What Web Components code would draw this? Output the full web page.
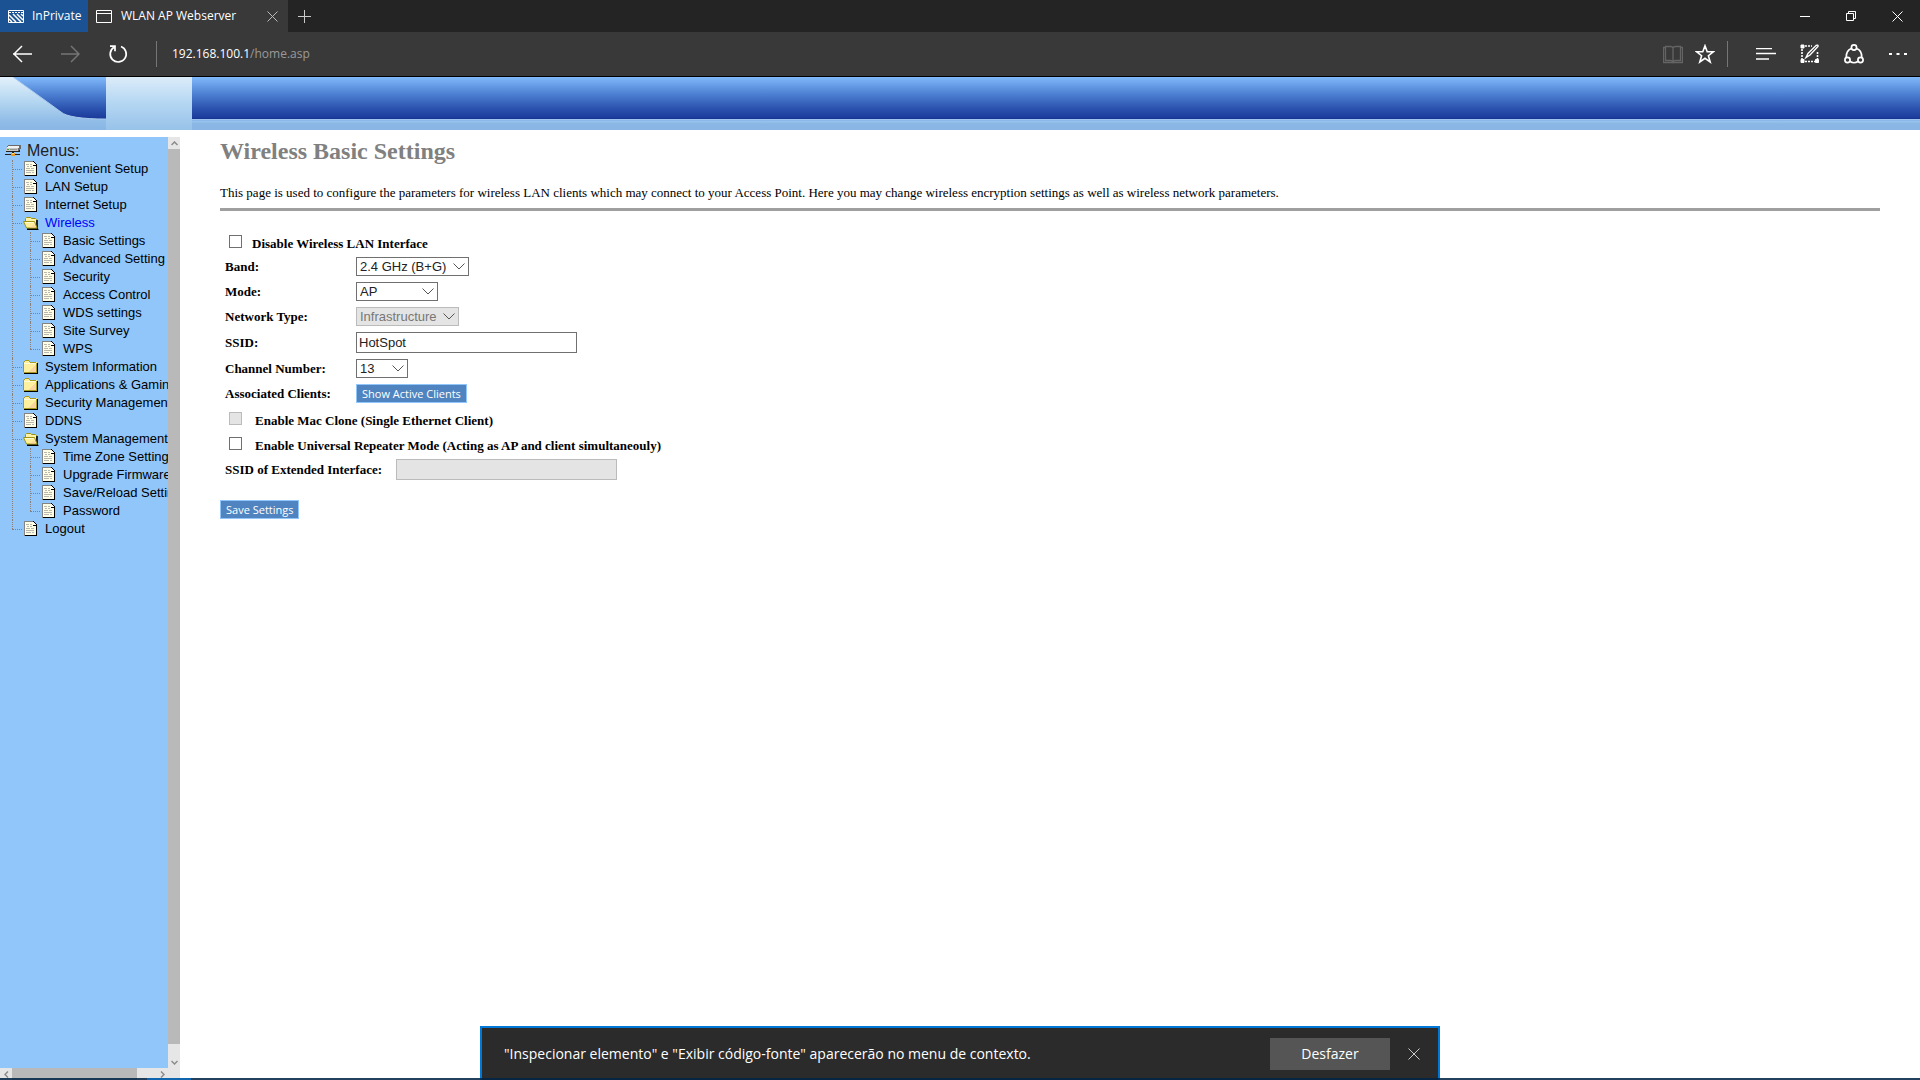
<!DOCTYPE html>
<html lang="en">
<head>
<meta charset="utf-8">
<title>WLAN AP Webserver</title>
<style>
  html, body { height: 100%; margin: 0; }
  body {
    display: flex;
    flex-direction: column;
    overflow: hidden;
    background: #fff;
    --ui-font: "Open Sans", "Noto Sans", sans-serif;
    --tree-font: "Liberation Sans", Arial, sans-serif;
    --page-font: "Liberation Serif", "Times New Roman", serif;
  }
  .frames { flex: 1; display: flex; min-height: 0; padding-top: 7px; }
</style>
</head>
<body>
<browser-tabs></browser-tabs>
<browser-toolbar></browser-toolbar>
<site-banner></site-banner>
<div class="frames">
  <menu-frame>
    <tree-node kind="root" label="Menus:">
      <tree-node label="Convenient Setup"></tree-node>
      <tree-node label="LAN Setup"></tree-node>
      <tree-node label="Internet Setup"></tree-node>
      <tree-node kind="open" label="Wireless" active>
        <tree-node label="Basic Settings"></tree-node>
        <tree-node label="Advanced Setting"></tree-node>
        <tree-node label="Security"></tree-node>
        <tree-node label="Access Control"></tree-node>
        <tree-node label="WDS settings"></tree-node>
        <tree-node label="Site Survey"></tree-node>
        <tree-node label="WPS"></tree-node>
      </tree-node>
      <tree-node kind="folder" label="System Information"></tree-node>
      <tree-node kind="folder" label="Applications &amp; Gaming"></tree-node>
      <tree-node kind="folder" label="Security Management"></tree-node>
      <tree-node label="DDNS"></tree-node>
      <tree-node kind="open" label="System Management">
        <tree-node label="Time Zone Setting"></tree-node>
        <tree-node label="Upgrade Firmware"></tree-node>
        <tree-node label="Save/Reload Settings"></tree-node>
        <tree-node label="Password"></tree-node>
      </tree-node>
      <tree-node label="Logout"></tree-node>
    </tree-node>
  </menu-frame>
  <wireless-settings></wireless-settings>
</div>
<notice-bar>
  "Inspecionar elemento" e "Exibir código-fonte" aparecerão no menu de contexto.
  <span slot="action">Desfazer</span>
</notice-bar>
<taskbar-edge></taskbar-edge>

<script>
class BrowserTabs extends HTMLElement {
  constructor() {
    super();
    this.attachShadow({ mode: "open" });
  }

  connectedCallback() {
    this.shadowRoot.innerHTML = `
      <style>
        :host {
          display: flex;
          flex: none;
          height: 32px;
          background: #242424;
          color: #fff;
          font: 12px/16px var(--ui-font);
        }
        svg { display: block; fill: none; stroke: currentColor; }
        button { margin: 0; padding: 0; border: 0; background: none; color: inherit; display: grid; place-items: center; }
        .private { display: flex; align-items: center; gap: 8px; width: 80px; padding-left: 8px; background: #1a5293; }
        .tab { display: flex; align-items: center; gap: 9px; width: 184px; padding: 0 8px; background: #393939; }
        .tab span { flex: 1; white-space: nowrap; }
        .tab button { width: 16px; height: 16px; color: #bbb; }
        .add { width: 33px; color: #ccc; }
        .window { display: flex; margin-left: auto; }
        .window button { width: 46px; }
      </style>
      <div class="private">
        <svg width="16" height="13">
          <path d="M.5 .5h15v12h-15z"/>
          <path d="M1 2.500h14" stroke-dasharray="2 1"/>
          <path d="M1 5l7 7M1 9l3 3M5 4l8 8M9 4l6 6M13 4l2 2" stroke-width="1.500"/>
        </svg>
        <span>InPrivate</span>
      </div>
      <div class="tab">
        <svg width="16" height="13"><path d="M.5 .5h15v12h-15zM0 3.500h16"/></svg>
        <span>WLAN AP Webserver</span>
        <button aria-label="Close tab"><svg width="11" height="11"><path d="M.5 .5l10 10M10.500 .5l-10 10"/></svg></button>
      </div>
      <button class="add" aria-label="New tab"><svg width="13" height="13"><path d="M6.500 0v13M0 6.500h13"/></svg></button>
      <div class="window">
        <button aria-label="Minimize"><svg width="10" height="10"><path d="M0 5.500h10"/></svg></button>
        <button aria-label="Restore"><svg width="10" height="10"><path d="M.5 2.500h7v7h-7zM2.500 2.500v-2h7v7h-2"/></svg></button>
        <button aria-label="Close"><svg width="11" height="11"><path d="M.5 .5l10 10M10.500 .5l-10 10"/></svg></button>
      </div>
    `;
  }
}

class BrowserToolbar extends HTMLElement {
  constructor() {
    super();
    this.attachShadow({ mode: "open" });
  }

  connectedCallback() {
    this.shadowRoot.innerHTML = `
      <style>
        :host {
          display: flex;
          flex: none;
          align-items: center;
          box-sizing: border-box;
          height: 45px;
          border-bottom: 1px solid #000;
          background: #393939;
          color: #fff;
          font: 12px/16px var(--ui-font);
        }
        svg { display: block; fill: none; stroke: currentColor; }
        button { margin: 0; padding: 0; border: 0; background: none; color: inherit; width: 48px; height: 44px; display: grid; place-items: center; }
        .off { color: #757575; }
        .rule { width: 1px; height: 26px; background: #767676; }
        .nav { display: flex; align-items: center; width: 157px; }
        .nav .rule { margin-left: auto; }
        .address { flex: 1; padding-left: 15px; }
        .address span { color: #999; }
        .tools { display: flex; align-items: center; }
        .tools button { width: 44px; }
        .tools .narrow { width: 32px; }
        .tools .rule { margin: 0 16px 0 6px; }
      </style>
      <div class="nav">
        <button aria-label="Back" style="width: 46px"><svg width="20" height="18" stroke-width="1.500"><path d="M0 9h19M9 1L1 9l8 8"/></svg></button>
        <button aria-label="Forward" class="off"><svg width="20" height="18" stroke-width="1.500"><path d="M1 9h18M11 1l8 8-8 8"/></svg></button>
        <button aria-label="Refresh"><svg width="20" height="20" stroke-width="1.700"><path d="M6 3.200A8 8 0 1 0 13 2.500M2 2.200h5v5"/></svg></button>
        <span class="rule"></span>
      </div>
      <div class="address">192.168.100.1<span>/home.asp</span></div>
      <div class="tools">
        <button class="narrow" aria-label="Reading view" style="color: #646464">
          <svg width="20" height="19" stroke-width="1.300"><path d="M.5 2.500h2v-1h5q2 0 2.500 1.500 .5-1.500 2.500-1.500h5v1h2v15h-19zM2.500 2.500v13h5q2 0 2.500 1.500 .5-1.500 2.500-1.500h5v-13M10 3v14"/></svg>
        </button>
        <button class="narrow" aria-label="Favorites">
          <svg width="20" height="20" stroke-width="1.600"><path d="M10 1.800l2.200 6h6.100l-4.900 3.900 1.800 6.300-5.200-3.700L4.800 18l1.800-6.300-4.900-3.900h6.100z"/></svg>
        </button>
        <span class="rule"></span>
        <button aria-label="Hub"><svg width="20" height="12"><path d="M0 .5h16M0 5.500h20M0 11h13" stroke-width="1.300"/></svg></button>
        <button aria-label="Make a web note">
          <svg width="20" height="20">
            <path d="M5 2h7M2 5v10M17.500 8v7M5 17.500h10" stroke-width="1.600" stroke-dasharray="2 1"/>
            <path d="M1 1h3v3h-3zM1 15.500h3v3h-3zM15.500 15.500h3v3h-3z" fill="#fff"/>
            <path d="M6 13.500l2-4 8-8q2.500-1 2 1l-8 8.500z" stroke-width="1.400"/>
          </svg>
        </button>
        <button aria-label="Share">
          <svg width="20" height="20" stroke-width="1.700">
            <circle cx="10" cy="3.500" r="2.600"/><circle cx="3.500" cy="16" r="2.600"/><circle cx="16.500" cy="16" r="2.600"/>
            <path d="M7.500 4.500Q2 6.500 2.300 13.500M12.500 4.500Q18 6.500 17.700 13.500M6 17.500q4 2.500 8 0"/>
          </svg>
        </button>
        <button aria-label="More"><svg width="18" height="4"><path d="M0 1h3v2h-3zM7.500 1h3v2h-3zM15 1h3v2h-3z" stroke="none" fill="#fff"/></svg></button>
      </div>
    `;
  }
}

class SiteBanner extends HTMLElement {
  constructor() {
    super();
    this.attachShadow({ mode: "open" });
  }

  connectedCallback() {
    this.shadowRoot.innerHTML = `
      <style>
        :host {
          display: flex;
          flex: none;
          height: 53px;
          background: linear-gradient(#80b9fb 0, #4a7dd0 18px, #2a51ad 32px, #1c3b9a 41px, #14308c 42px, #a9cdf0 42px, #7fb0e6 44px, #98c4ec 44px, #8ab6e5 47px, #8ab6e5);
        }
        svg { display: block; }
        .pale { width: 86px; background: linear-gradient(#dcecf9, #b2d5f2 28px, #98c2e9 53px); }
      </style>
      <svg width="106" height="53">
        <defs>
          <linearGradient id="g" x2="0" y2="1">
            <stop stop-color="#e3f1fb"/><stop offset=".5" stop-color="#b0d4f0"/><stop offset=".85" stop-color="#8fbbe7"/><stop offset="1" stop-color="#8ab6e5"/>
          </linearGradient>
        </defs>
        <path d="M0 0h13L61 35q8 7 45 7v11H0z" fill="url(#g)"/>
        <path d="M13 0L61 35q8 7 45 7" fill="none" stroke="#a9c9ee"/>
      </svg>
      <div class="pale"></div>
    `;
  }
}

const ICONS = {
  root: `
    <svg width="16" height="12" shape-rendering="crispEdges">
      <path d="M3 0h13v4h-1v1h-1v1H1V3h1V1h1z" fill="#6a6a6a"/>
      <path d="M3 1h11v1H3zM2 2h12v1H2z" fill="#f2f2f2"/>
      <path d="M1 3h12v3H1z" fill="#c6c6c6"/>
      <path d="M2 4h2v1H2z" fill="#3a3"/>
      <path d="M5 4h7v1H5z" fill="#999"/>
      <path d="M1 6h13V5h1v2H1z" fill="#222"/>
      <path d="M7 7h2v2H7zM0 9h15v1H0z" fill="#222"/>
      <path d="M6 8h4v3H6z" fill="#ee9a20"/>
      <path d="M7 8h2v1H7z" fill="#ffe080"/>
    </svg>`,
  page: `
    <svg width="13" height="16" shape-rendering="crispEdges">
      <path d="M1 1h8l3 3v11H1z" fill="#fffee4"/>
      <path d="M0 0h9v1H1v14H0z" fill="#848484"/>
      <path d="M1 15h12V4h-1v10H1z" fill="#000"/>
      <path d="M9 0h1v1h1v1h1v1h1v2H9z" fill="#000"/>
      <path d="M9 1h1v1h1v1h1v1H9z" fill="#fff"/>
      <path d="M2 3h3v1H2zM6 3h2v1H6zM3 5h2v1H3zM6 5h2v1H6zM2 7h4v1H2zM7 7h3v1H7zM2 9h8v1H2zM2 11h5v1H2zM8 11h2v1H8z" fill="#b8b8b0"/>
    </svg>`,
  folder: `
    <svg width="16" height="14" shape-rendering="crispEdges">
      <path d="M1 12V2h1V1h5v1h7v10z" fill="#fff0a0"/>
      <path d="M5 12l8-7v7z" fill="#fcd4a0"/>
      <path d="M0 2h1v10H0zM1 1h1v1H1zM2 0h4v1H2zM6 1h1v1H6zM7 2h6v1H7zM1 12h13v1H1zM13 3h1v9h-1z" fill="#a59a20"/>
      <path d="M1 3h12v1H1z" fill="#fffbd8"/>
      <path d="M14 3h1v11H1v-1h13z" fill="#000"/>
    </svg>`,
  open: `
    <svg width="16" height="14">
      <path d="M2.500 6V2.500l1-1h4l1 1h4l1 1V11" fill="#fff3a8" stroke="#9c9410"/>
      <path d="M13 4h2v9H4v-1h9z" fill="#222"/>
      <path d="M.5 5.500h11l2.500 6.500H3.500z" fill="#ffee9c" stroke="#9c9410"/>
      <path d="M2 6.500h9" stroke="#fffbd8"/>
      <path d="M7 11.500l4-3 1 3z" fill="#fcd4a0"/>
      <path d="M4 13.500h11.500" stroke="#000"/>
    </svg>`
};

class TreeNode extends HTMLElement {
  constructor() {
    super();
    this.attachShadow({ mode: "open" });
  }

  connectedCallback() {
    const kind = this.getAttribute("kind") || "page";
    this.shadowRoot.innerHTML = `
      <style>
        :host { display: block; position: relative; font: 13px/18px var(--tree-font); }
        a { display: flex; height: 18px; color: #000; text-decoration: none; white-space: nowrap; }
        :host([active]) a { color: #00f; }
        .icon { display: grid; place-items: center start; flex: none; box-sizing: border-box; width: 23px; padding-left: 2px; }
        .icon svg { display: block; }
        :host([kind="folder"]) .icon, :host([kind="open"]) .icon { padding-left: 1px; }
        .twig { flex: none; width: 10px; height: 1px; margin-top: 9px; border-top: 1px dotted #8a8078; }
        .kids { display: block; padding-left: 18px; }
        /* each child draws its own piece of the branch on its left */
        .branch { position: absolute; left: 0; top: 0; bottom: 0; border-left: 1px dotted #8a8078; }
        :host(:last-child) .branch { bottom: auto; height: 9px; }
        :host([kind="root"]) { font-size: 16px; }
        :host([kind="root"]) a { color: #222; }
        :host([kind="root"]) .kids { padding-left: 12px; }
        :host([kind="root"]) .twig, :host([kind="root"]) .branch { display: none; }
        :host([kind="root"]) .icon { width: 27px; padding-left: 5px; }
      </style>
      <span class="branch"></span>
      <a href="#"><span class="twig"></span><span class="icon">${ICONS[kind]}</span><span class="text"></span></a>
      <div class="kids"><slot></slot></div>
    `;
    this.shadowRoot.querySelector(".text").textContent = this.getAttribute("label");
  }
}

class MenuFrame extends HTMLElement {
  constructor() {
    super();
    this.attachShadow({ mode: "open" });
  }

  connectedCallback() {
    this.shadowRoot.innerHTML = `
      <style>
        :host { display: grid; flex: none; grid-template: 1fr 12px / 168px 12px; min-height: 0; background: #e6e6e6; }
        .tree { overflow: hidden; padding-top: 5px; background: #91c6fa; }
        .bar { display: flex; background: #e6e6e6; }
        .bar.v { flex-direction: column; }
        .bar button { flex: none; width: 12px; height: 12px; margin: 0; padding: 0; border: 0; background: none; display: grid; place-items: center; }
        .bar svg { display: block; fill: none; stroke: #8c8c8c; stroke-width: 1.500; }
        .thumb { flex: 1; background: #b9b9b9; }
        .bar.v .thumb { margin-bottom: 12px; }
        .bar.h .thumb { margin-right: 19px; }
      </style>
      <div class="tree"><slot></slot></div>
      <div class="bar v">
        <button aria-label="Scroll up"><svg width="7" height="5"><path d="M.5 4l3-3 3 3"/></svg></button>
        <div class="thumb"></div>
        <button aria-label="Scroll down"><svg width="7" height="5"><path d="M.5 1l3 3 3-3"/></svg></button>
      </div>
      <div class="bar h">
        <button aria-label="Scroll left"><svg width="5" height="7"><path d="M4 .5l-3 3 3 3"/></svg></button>
        <div class="thumb"></div>
        <button aria-label="Scroll right"><svg width="5" height="7"><path d="M1 .5l3 3-3 3"/></svg></button>
      </div>
    `;
  }
}

class FormRow extends HTMLElement {
  constructor() {
    super();
    this.attachShadow({ mode: "open" });
  }

  connectedCallback() {
    this.shadowRoot.innerHTML = `
      <style>
        :host { display: flex; align-items: center; padding: 3px 5px; }
        .name { min-width: 131px; }
        :host([wide]) .name { min-width: 171px; }
      </style>
      <div class="name"><slot name="name"></slot></div>
      <slot></slot>
    `;
  }
}

class CheckRow extends HTMLElement {
  constructor() {
    super();
    this.attachShadow({ mode: "open" });
  }

  connectedCallback() {
    this.shadowRoot.innerHTML = `
      <style>
        :host { display: flex; align-items: flex-start; height: 25px; padding-left: 9px; gap: var(--check-gap, 13px); }
      </style>
      <slot></slot>
    `;
  }
}

class WirelessSettings extends HTMLElement {
  constructor() {
    super();
    this.attachShadow({ mode: "open" });
  }

  connectedCallback() {
    this.shadowRoot.innerHTML = `
      <style>
        :host { display: block; flex: 1; padding: 0 40px; color: #000; font: 13px/16px var(--page-font); }
        h2 { margin: 0; font-size: 24px; line-height: 28px; color: #808080; }
        p { margin: 20px 0 7px; }
        hr { height: 3px; margin: 0 0 24px; border: 0; background: #9f9f9f; }
        label, .label { font-weight: bold; white-space: nowrap; }
        select, input { box-sizing: border-box; margin: 0; border: 1px solid #707070; border-radius: 0; background-color: #fff; color: #222; font: 13px/17px var(--tree-font); }
        select {
          appearance: none;
          height: 19px;
          padding: 0 3px;
          background-image: url("data:image/svg+xml,%3Csvg xmlns='http://www.w3.org/2000/svg' width='12' height='7'%3E%3Cpath d='M.5 .5l5.500 5.500 5.500-5.500' fill='none' stroke='%23555'/%3E%3C/svg%3E");
          background-repeat: no-repeat;
          background-position: right 3px center;
        }
        input[type="text"] { width: 221px; height: 21px; padding: 0 2px; }
        input[type="checkbox"] { appearance: none; flex: none; width: 13px; height: 13px; }
        label.check { padding-top: 1px; }
        select:disabled, input:disabled { border-color: #bbb; background-color: #e4e4e4; color: #777; opacity: 1; }
        button { height: 19px; margin: 0; padding: 0 5px; border: 1px solid #91c6fa; background: #4f84c0; color: #fff; font: 11px/17px var(--ui-font); }
        .first { --check-gap: 10px; height: 19px; }
        .save { margin-top: 17px; }
      </style>
      <h2>Wireless Basic Settings</h2>
      <p>This page is used to configure the parameters for wireless LAN clients which may connect to your Access Point. Here you may change wireless encryption settings as well as wireless network parameters.</p>
      <hr>
      <form>
        <check-row class="first"><input type="checkbox" id="off"><label class="check" for="off">Disable Wireless LAN Interface</label></check-row>
        <form-row>
          <label slot="name" for="band">Band:</label>
          <select id="band" style="width: 113px"><option>2.4 GHz (B+G)</option></select>
        </form-row>
        <form-row>
          <label slot="name" for="mode">Mode:</label>
          <select id="mode" style="width: 82px"><option>AP</option></select>
        </form-row>
        <form-row>
          <label slot="name" for="type">Network Type:</label>
          <select id="type" style="width: 103px" disabled><option>Infrastructure</option></select>
        </form-row>
        <form-row>
          <label slot="name" for="ssid">SSID:</label>
          <input type="text" id="ssid" value="HotSpot">
        </form-row>
        <form-row>
          <label slot="name" for="channel">Channel Number:</label>
          <select id="channel" style="width: 52px"><option>13</option></select>
        </form-row>
        <form-row>
          <span slot="name" class="label">Associated Clients:</span>
          <button type="button">Show Active Clients</button>
        </form-row>
        <check-row style="padding-top: 6px"><input type="checkbox" id="clone" disabled><label class="check" for="clone">Enable Mac Clone (Single Ethernet Client)</label></check-row>
        <check-row style="height: 19px"><input type="checkbox" id="repeater"><label class="check" for="repeater">Enable Universal Repeater Mode (Acting as AP and client simultaneouly)</label></check-row>
        <form-row wide>
          <label slot="name" for="ext">SSID of Extended Interface:</label>
          <input type="text" id="ext" disabled>
        </form-row>
        <button type="button" class="save">Save Settings</button>
      </form>
    `;
  }
}

class NoticeBar extends HTMLElement {
  constructor() {
    super();
    this.attachShadow({ mode: "open" });
  }

  connectedCallback() {
    this.shadowRoot.innerHTML = `
      <style>
        :host {
          position: fixed;
          bottom: 0;
          left: 25%;
          right: 25%;
          display: flex;
          align-items: center;
          box-sizing: border-box;
          height: 54px;
          padding: 0 14px 0 22px;
          border: 2px solid #0078d7;
          border-bottom: 0;
          background: #2b2b2b;
          color: #fff;
          font: 14px/20px var(--ui-font);
        }
        .text { flex: 1; white-space: nowrap; }
        button { margin: 0; padding: 0; border: 0; color: inherit; font: inherit; }
        .action { width: 120px; height: 32px; background: #555; }
        .close { width: 20px; height: 20px; margin-left: 14px; background: none; display: grid; place-items: center; }
        svg { display: block; stroke: #ccc; }
      </style>
      <div class="text"><slot></slot></div>
      <button class="action"><slot name="action"></slot></button>
      <button class="close" aria-label="Fechar"><svg width="12" height="12"><path d="M.5 .5l11 11M11.500 .5l-11 11"/></svg></button>
    `;
  }
}

class TaskbarEdge extends HTMLElement {
  constructor() {
    super();
    this.attachShadow({ mode: "open" });
  }

  connectedCallback() {
    this.shadowRoot.innerHTML = `
      <style>
        :host { display: block; position: fixed; left: 0; right: 0; bottom: 0; height: 2px; background: rgba(0, 37, 71, .87); }
        .app { width: 44px; height: 2px; margin-left: 147px; background: #0f66ae; }
      </style>
      <div class="app"></div>
    `;
  }
}

customElements.define("browser-tabs", BrowserTabs);
customElements.define("browser-toolbar", BrowserToolbar);
customElements.define("site-banner", SiteBanner);
customElements.define("tree-node", TreeNode);
customElements.define("menu-frame", MenuFrame);
customElements.define("form-row", FormRow);
customElements.define("check-row", CheckRow);
customElements.define("wireless-settings", WirelessSettings);
customElements.define("notice-bar", NoticeBar);
customElements.define("taskbar-edge", TaskbarEdge);
</script>
</body>
</html>
